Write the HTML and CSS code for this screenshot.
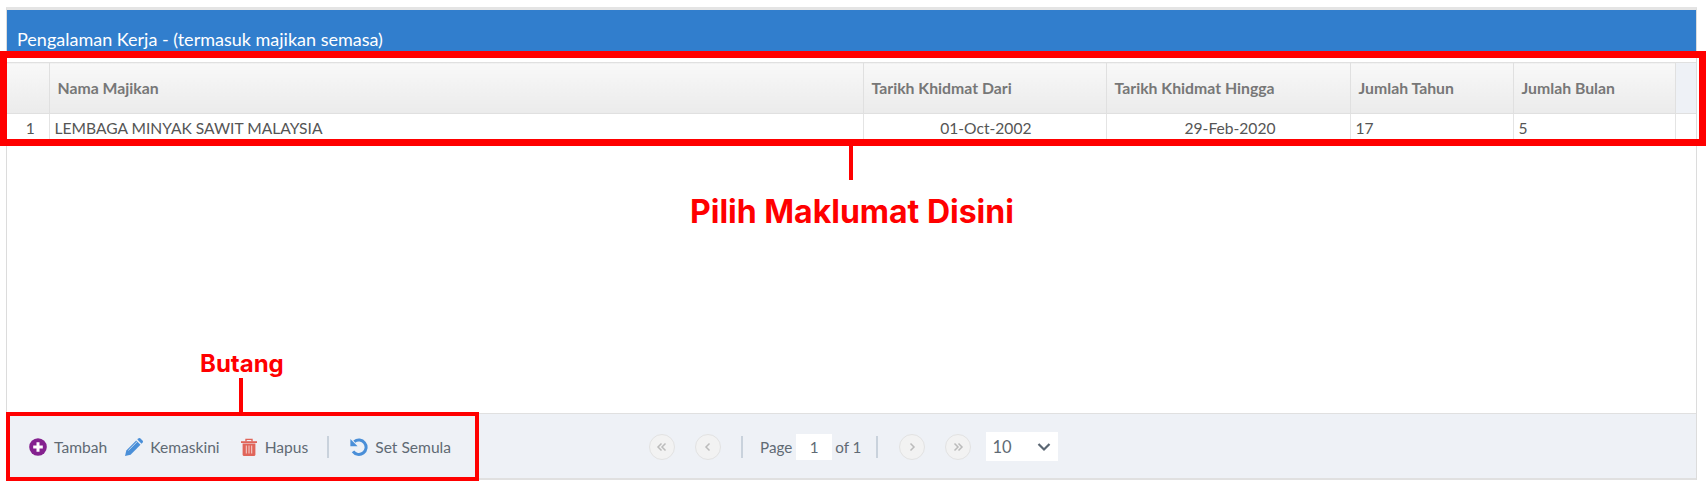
FILE: index.html
```html
<!DOCTYPE html>
<html lang="ms">
<head>
<meta charset="utf-8">
<title>Pengalaman Kerja</title>
<link rel="stylesheet" href="styles.css">
</head>
<body>
<div class="panel">
  <div class="panel-title"><span>Pengalaman Kerja - (termasuk majikan semasa)</span></div>
  <div class="grid-area">
    <table class="grid">
      <colgroup>
        <col class="c-num"><col class="c-name"><col class="c-from"><col class="c-to"><col class="c-years"><col class="c-months"><col>
      </colgroup>
      <thead>
        <tr>
          <th></th>
          <th>Nama Majikan</th>
          <th>Tarikh Khidmat Dari</th>
          <th>Tarikh Khidmat Hingga</th>
          <th>Jumlah Tahun</th>
          <th>Jumlah Bulan</th>
          <th class="filler"></th>
        </tr>
      </thead>
      <tbody>
        <tr>
          <td class="num">1</td>
          <td>LEMBAGA MINYAK SAWIT MALAYSIA</td>
          <td class="date">01-Oct-2002</td>
          <td class="date">29-Feb-2020</td>
          <td>17</td>
          <td>5</td>
          <td></td>
        </tr>
      </tbody>
    </table>
  </div>
  <div class="footer">
    <div class="actions">
      <a class="action action-add">
        <svg class="icon" viewBox="0 0 18 18"><circle cx="9" cy="9" r="8.800" fill="#84218f"/><path d="M9 4.200v9.600M4.200 9h9.600" stroke="#fff" stroke-width="3"/></svg>
        <span>Tambah</span>
      </a>
      <a class="action action-edit">
        <svg class="icon" viewBox="0 0 18 18"><path d="M0 18l1.300-5.600L11.200 2.500l4.300 4.300L5.600 16.700z" fill="#4a8fd8"/><path d="M12.300 1.500l1-1a1.500 1.500 0 0 1 2.100 0l2.100 2.100a1.500 1.500 0 0 1 0 2.100l-1 1z" fill="#4a8fd8"/><path d="M3.400 12.400l8.600-8.600" stroke="#cfe0f3" stroke-width=".9"/></svg>
        <span>Kemaskini</span>
      </a>
      <a class="action">
        <svg class="icon" viewBox="0 0 18 18"><path d="M1 3.200h16v1.800H1z" fill="#e0655a"/><path d="M6 3.400V1.400h6v2" fill="none" stroke="#e0655a" stroke-width="1.400"/><path d="M2.600 5.600h12.800v10.800a1.500 1.500 0 0 1-1.500 1.500H4.100a1.500 1.500 0 0 1-1.500-1.500z" fill="#e0655a"/><path d="M6.300 7.500v8M9 7.500v8M11.700 7.500v8" stroke="#f6d3cf" stroke-width="1"/></svg>
        <span>Hapus</span>
      </a>
      <i class="sep"></i>
      <a class="action reset">
        <svg class="icon" viewBox="0 0 18 18"><path d="M4.300 3.700A7.200 7.200 0 1 1 3 13.400" fill="none" stroke="#4a8fd8" stroke-width="3"/><path d="M.4 1v7.200h7.200z" fill="#4a8fd8"/></svg>
        <span>Set Semula</span>
      </a>
    </div>
    <div class="pager">
      <button class="round"><svg viewBox="0 0 12 12"><path d="M5.500 2.500L2 6l3.500 3.500M9.500 2.500L6 6l3.500 3.500" fill="none" stroke="#bbb" stroke-width="1.500"/></svg></button>
      <button class="round"><svg viewBox="0 0 12 12"><path d="M7.500 2.500L4 6l3.500 3.500" fill="none" stroke="#bbb" stroke-width="1.500"/></svg></button>
      <i class="sep"></i>
      <span class="page-label">Page</span>
      <span class="page-input">1</span>
      <span class="page-of">of 1</span>
      <i class="sep sep-end"></i>
      <button class="round"><svg viewBox="0 0 12 12"><path d="M4.500 2.500L8 6l-3.500 3.500" fill="none" stroke="#bbb" stroke-width="1.500"/></svg></button>
      <button class="round"><svg viewBox="0 0 12 12"><path d="M2.500 2.500L6 6l-3.500 3.500M6.500 2.500L10 6l-3.500 3.500" fill="none" stroke="#bbb" stroke-width="1.500"/></svg></button>
      <div class="size-select"><span>10</span><svg viewBox="0 0 14 10"><path d="M1.500 2l5.500 5.500L12.500 2" fill="none" stroke="#5a6672" stroke-width="2.200"/></svg></div>
    </div>
  </div>
</div>

<div class="note-box note-box-grid"></div>
<div class="stem stem-grid"></div>
<div class="note note-grid">Pilih Maklumat Disini</div>
<div class="note-box note-box-btn"></div>
<div class="stem stem-btn"></div>
<div class="note note-btn">Butang</div>
</body>
</html>
```

FILE: styles.css
```css
* { box-sizing: border-box; }
html, body { margin: 0; padding: 0; background: #fff; }
body { width: 1706px; height: 488px; position: relative; overflow: hidden; font-family: Lato, "Open Sans", sans-serif; color: #555; }

.panel { margin: 7px 9px 0 6px; height: 473px; display: flex; flex-direction: column; border-top: 3px solid #e4e4e4; border-left: 1px solid #dcdcdc; border-right: 1px solid #dcdcdc; }
.panel-title { height: 42px; background: #317ecd; color: #fff; font-size: 18px; line-height: 22px; display: flex; align-items: flex-end; padding: 0 0 2px 10px; flex: none; }
.grid-area { flex: 1; padding-top: 10px; background: #fff; }

.grid { width: 100%; border-collapse: collapse; table-layout: fixed; font-size: 15.8px; }
.c-num { width: 42px; }
.c-name { width: 814px; }
.c-from { width: 243px; }
.c-to { width: 244px; }
.c-years { width: 163px; }
.c-months { width: 162px; }
.grid th { height: 51px; padding: 0 0 2px 8px; text-align: left; font-weight: 700; color: #777; background: linear-gradient(#f8f8f8, #ebebeb); border: 1px solid #e0e0e0; border-left: 0; white-space: nowrap; }
.grid th.filler { background: #eef1f6; border-right: 0; }
.grid td { height: 30px; padding: 0 0 2px 5px; font-size: 15.6px; color: #555; border-right: 1px solid #e4e4e4; border-bottom: 1px solid #e4e4e4; white-space: nowrap; }
.grid td:last-child { border-right: 0; }
.grid td.num { text-align: center; padding: 0 0 2px 5px; }
.grid td.date { text-align: right; padding: 0 74px 2px 0; }

.footer { height: 67px; flex: none; display: flex; align-items: center; background: #eef1f6; border-top: 1px solid #e0e0e0; border-bottom: 2px solid #e0e0e0; padding-top: 1px; }
.actions { width: 642px; display: flex; align-items: center; padding-left: 22px; }
.action { display: flex; align-items: center; gap: 7px; margin-right: 19px; font-size: 15.6px; color: #606a74; }
.action-add { margin-right: 18px; }
.action-edit { margin-right: 20px; }
.action.reset { margin-left: 21px; margin-right: 0; }
.icon { width: 18px; height: 18px; display: block; flex: none; }
.sep { width: 2px; height: 22px; background: #c9d2dc; display: block; flex: none; }

.pager { display: flex; align-items: center; font-size: 15.2px; color: #606a74; }
.round { width: 26px; height: 26px; padding: 6px; border-radius: 50%; border: 1px solid #e2e2e2; background: #f2f2f2; display: block; margin-right: 20px; }
.round svg { display: block; width: 12px; height: 12px; }
.pager .sep { margin-right: 17px; }
.pager .sep-end { margin-right: 21px; }
.page-input { width: 36px; height: 26px; background: #fff; display: flex; align-items: center; justify-content: center; margin: 0 3px 0 4px; }
.page-of { margin-right: 15px; }
.size-select { width: 72px; height: 29px; margin-left: -5px; background: #fff; display: flex; align-items: center; justify-content: space-between; padding: 0 7px 0 6px; font-size: 16.5px; }
.size-select svg { width: 14px; height: 10px; display: block; }

.note-box { position: absolute; border-style: solid; border-color: #f00; background: transparent; }
.note-box-grid { left: 0; top: 51px; width: 1706px; height: 95px; border-width: 7px; }
.note-box-btn { left: 6px; top: 412px; width: 473px; height: 69px; border-width: 4px; }
.stem { position: absolute; width: 4px; background: #f00; }
.stem-grid { left: 849px; top: 146px; height: 34px; }
.stem-btn { left: 239px; top: 378px; height: 34px; }
.note { position: absolute; color: #f00; font-family: Inter, sans-serif; font-weight: 700; white-space: nowrap; line-height: 1; }
.note-grid { left: 690px; top: 196px; font-size: 32px; }
.note-btn { left: 200px; top: 352px; font-size: 24px; }
```
